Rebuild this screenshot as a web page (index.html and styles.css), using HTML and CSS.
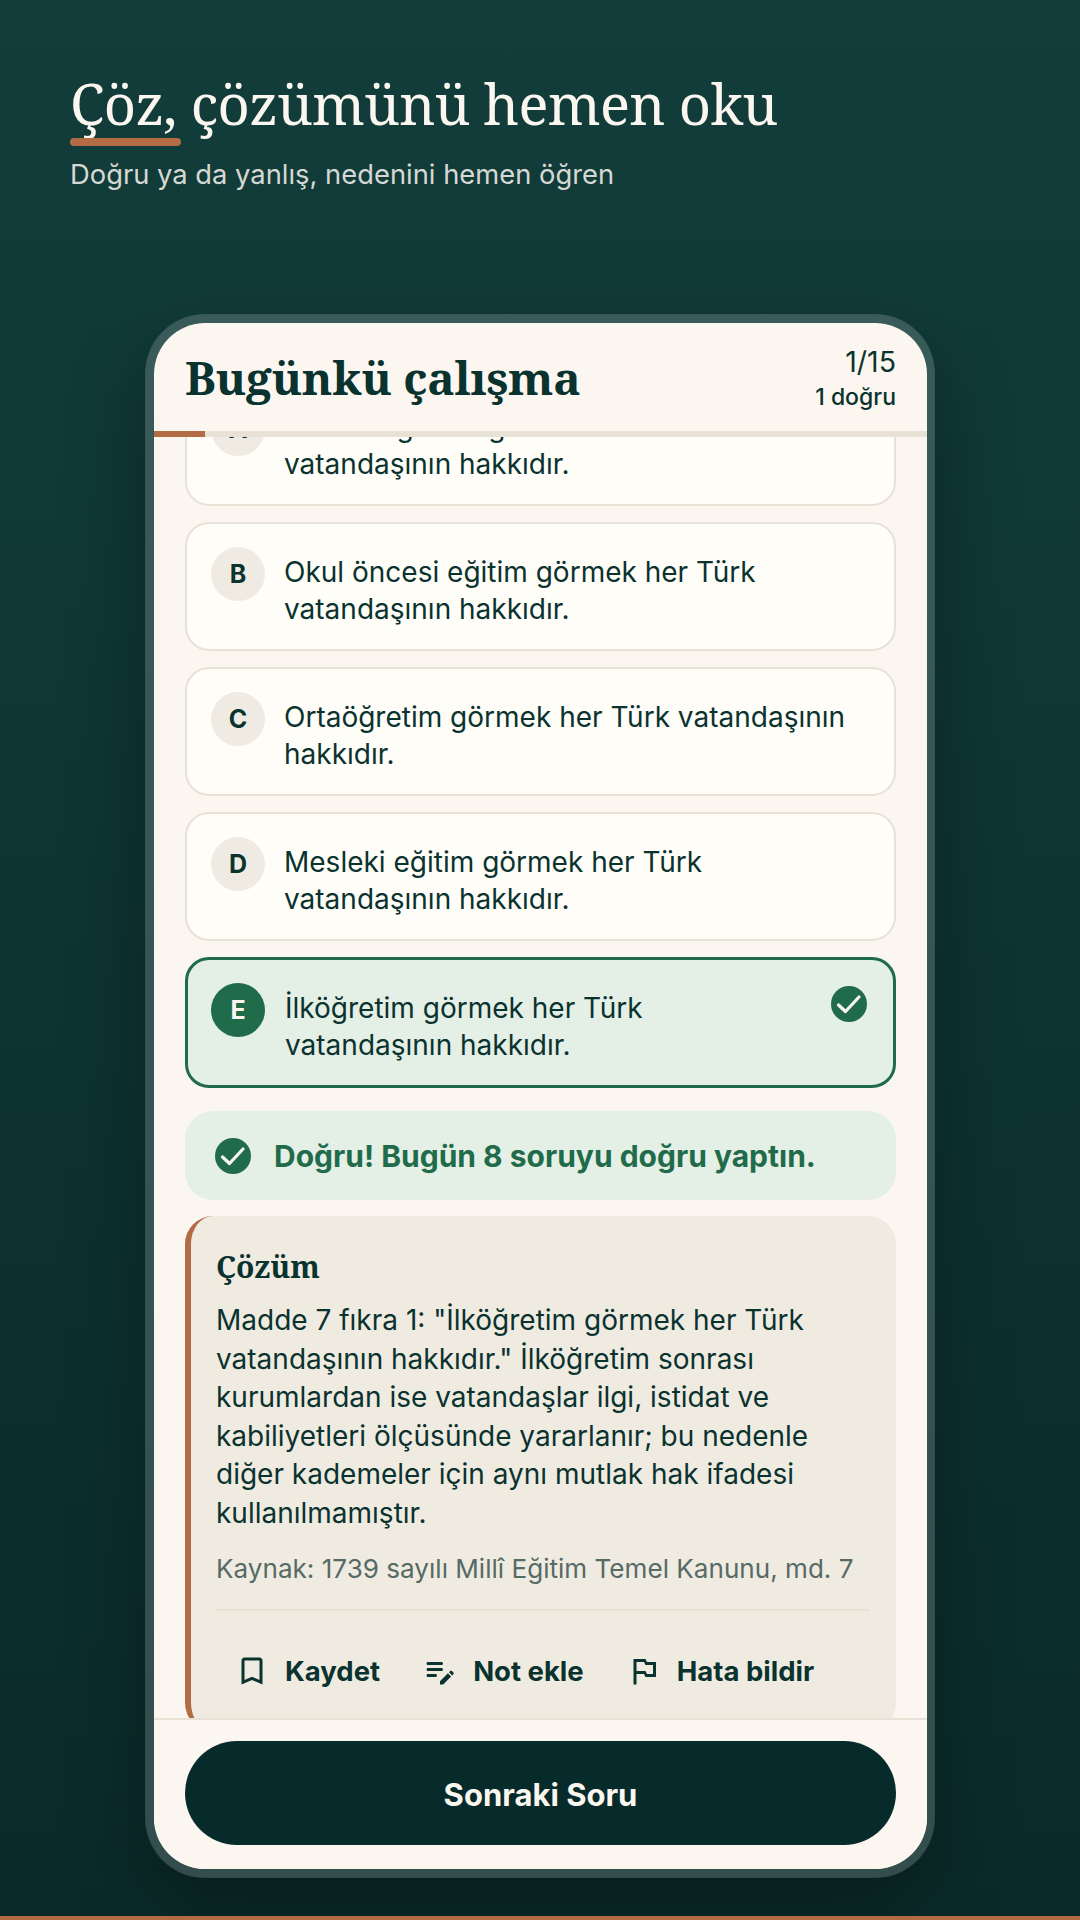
FILE: index.html
```html
<!DOCTYPE html>
<html lang="tr">
<head>
  <meta charset="UTF-8" />
  <meta name="viewport" content="width=device-width, initial-scale=1.0"/>
  <title>Bugünkü çalışma</title>
  <link rel="stylesheet" href="styles.css">
</head>
<body>

<div class="page">
  <div class="hero">
    <h1><span class="marked">Çöz,</span> çözümünü hemen oku</h1>
    <p>Doğru ya da yanlış, nedenini hemen öğren</p>
  </div>

  <div class="phone">
    <div class="top-bar">
      <h2>Bugünkü çalışma</h2>
      <div class="score">
        <span class="count">1/15</span>
        <span class="correct">1 doğru</span>
      </div>
    </div>
    <div class="progress"><div class="progress-fill"></div></div>

    <div class="scroll">
      <div class="scroll-inner">
        <div class="option">
          <span class="letter">A</span>
          <span class="option-text">Yükseköğretim görmek her Türk vatandaşının hakkıdır.</span>
        </div>
        <div class="option">
          <span class="letter">B</span>
          <span class="option-text">Okul öncesi eğitim görmek her Türk vatandaşının hakkıdır.</span>
        </div>
        <div class="option">
          <span class="letter">C</span>
          <span class="option-text">Ortaöğretim görmek her Türk vatandaşının hakkıdır.</span>
        </div>
        <div class="option">
          <span class="letter">D</span>
          <span class="option-text">Mesleki eğitim görmek her Türk vatandaşının hakkıdır.</span>
        </div>
        <div class="option option-right">
          <span class="letter">E</span>
          <span class="option-text">İlköğretim görmek her Türk vatandaşının hakkıdır.</span>
          <svg class="check" viewBox="0 0 36 36"><circle cx="18" cy="18" r="18"/><polyline points="7.5,19 14.5,25.5 28,11"/></svg>
        </div>

        <div class="feedback">
          <svg class="check" viewBox="0 0 36 36"><circle cx="18" cy="18" r="18"/><polyline points="7.5,19 14.5,25.5 28,11"/></svg>
          <span>Doğru! Bugün 8 soruyu doğru yaptın.</span>
        </div>

        <div class="solution">
          <h3>Çözüm</h3>
          <p class="solution-text">Madde 7 fıkra 1: "İlköğretim görmek her Türk vatandaşının hakkıdır." İlköğretim sonrası kurumlardan ise vatandaşlar ilgi, istidat ve kabiliyetleri ölçüsünde yararlanır; bu nedenle diğer kademeler için aynı mutlak hak ifadesi kullanılmamıştır.</p>
          <p class="source">Kaynak: 1739 sayılı Millî Eğitim Temel Kanunu, md. 7</p>
          <div class="actions">
            <div class="action">
              <svg viewBox="0 0 24 24"><path d="M17 3H7c-1.1 0-2 .9-2 2v16l7-3 7 3V5c0-1.1-.9-2-2-2zm0 15l-5-2.18L7 18V5h10v13z"/></svg>
              <span>Kaydet</span>
            </div>
            <div class="action">
              <svg viewBox="0 0 24 24"><path d="M14 11c0 .55-.45 1-1 1H4c-.55 0-1-.45-1-1s.45-1 1-1h9c.55 0 1 .45 1 1zM3 7c0 .55.45 1 1 1h9c.55 0 1-.45 1-1s-.45-1-1-1H4c-.55 0-1 .45-1 1zm7 8c0-.55-.45-1-1-1H4c-.55 0-1 .45-1 1s.45 1 1 1h5c.55 0 1-.45 1-1zm8.01-2.13.71-.71c.39-.39 1.02-.39 1.41 0l.71.71c.39.39.39 1.02 0 1.41l-.71.71-2.12-2.12zm-.71.71L12 18.88V21h2.12l5.3-5.3-2.12-2.12z"/></svg>
              <span>Not ekle</span>
            </div>
            <div class="action">
              <svg viewBox="0 0 24 24"><path d="M14 6l-1-2H5v17h2v-7h5l1 2h7V6h-6zm4 8h-4l-1-2H7V6h5l1 2h5v6z"/></svg>
              <span>Hata bildir</span>
            </div>
          </div>
        </div>
      </div>
    </div>

    <div class="footer">
      <button type="button" class="next-btn">Sonraki Soru</button>
    </div>
  </div>

  <div class="bottom-line"></div>
</div>

</body>
</html>
```

FILE: styles.css
```css
html, body { margin: 0; padding: 0; }
body { font-family: Inter, "Noto Sans", sans-serif; color: #0a322f; }

.page {
  width: 1080px;
  height: 1920px;
  display: flex;
  flex-direction: column;
  overflow: hidden;
  background: linear-gradient(180deg, #123d3b 0%, #0f3836 30%, #0a2a29 100%);
}

.hero { height: 314px; padding: 70px 70px 0; box-sizing: border-box; color: #fbf7f0; }
.hero h1 {
  margin: 0;
  font-family: "Noto Serif", "Liberation Serif", serif;
  font-weight: 400;
  font-size: 56px;
  line-height: 66px;
  letter-spacing: -0.65px;
}
.marked { position: relative; display: inline-block; }
.marked::after {
  content: "";
  position: absolute;
  left: 0;
  bottom: -10px;
  width: 111px;
  height: 8px;
  border-radius: 4px;
  background: #b36b43;
}
.hero p { margin: 21px 0 0; font-size: 27.35px; line-height: 36px; color: rgba(251, 247, 240, 0.85); }

.phone {
  width: 790px;
  height: 1564px;
  margin: 0 auto;
  box-sizing: border-box;
  border: 9px solid rgba(255, 255, 255, 0.17);
  border-right-width: 8px;
  border-radius: 60px;
  background: #fbf7f0;
  background-clip: padding-box;
  display: flex;
  flex-direction: column;
  overflow: hidden;
  box-shadow: 0 30px 80px rgba(0, 0, 0, 0.3);
}

.top-bar {
  height: 108px;
  padding: 0 31px;
  flex: none;
  display: flex;
  align-items: center;
  justify-content: space-between;
}
.top-bar h2 {
  margin: 0;
  font-family: "Noto Serif", "Liberation Serif", serif;
  font-weight: 700;
  font-size: 46px;
  letter-spacing: -0.3px;
}
.score { display: flex; flex-direction: column; align-items: flex-end; margin-top: 4px; }
.count { font-size: 28.5px; line-height: 36px; }
.correct { font-size: 23px; line-height: 34px; font-weight: 500; }

.progress { height: 6px; flex: none; background: #e8e2d6; }
.progress-fill { width: 51px; height: 100%; background: #b36b43; }

.scroll { flex: 1; overflow: hidden; min-height: 0; }
.scroll-inner {
  margin-top: -60px;
  padding: 0 31px;
  display: flex;
  flex-direction: column;
}

.option {
  min-height: 129px;
  margin-bottom: 16px;
  padding: 23px 24px 0;
  box-sizing: border-box;
  display: flex;
  align-items: flex-start;
  gap: 19px;
  background: #fffdf8;
  border: 2px solid #e8e2d6;
  border-radius: 24px;
}
.letter {
  width: 54px;
  height: 54px;
  flex: none;
  border-radius: 50%;
  background: #f0ebe2;
  display: flex;
  align-items: center;
  justify-content: center;
  font-weight: 700;
  font-size: 25px;
}
.option-text { flex: 1; font-size: 28px; line-height: 37px; padding-top: 7px; padding-right: 12px; }
.option-right {
  min-height: 131px;
  margin-bottom: 23px;
  padding-left: 23px;
  gap: 20px;
  background: #e4efe6;
  border: 3px solid #1f6b4a;
}
.option-right .letter { background: #1f6b4a; color: #fbf7f0; }
.option-right .option-text { padding-right: 38px; }
.check { width: 36px; height: 36px; flex: none; }
.check circle { fill: #1f6b4a; }
.check polyline { fill: none; stroke: #fbf7f0; stroke-width: 3.2; stroke-linecap: round; stroke-linejoin: round; }
.option-right .check { margin: 3px 2px 0 0; }

.feedback {
  height: 89px;
  margin-bottom: 16px;
  padding: 0 30px;
  box-sizing: border-box;
  display: flex;
  align-items: center;
  gap: 23px;
  background: #e4efe6;
  border-radius: 28px;
  font-weight: 700;
  font-size: 30px;
  color: #1f6b4a;
}

.solution {
  padding: 29px 26px 30px 25px;
  background: #f0ebe1;
  border-left: 6px solid #b36b43;
  border-radius: 28px;
}
.solution h3 {
  margin: 0 0 12px;
  font-family: "Noto Serif", "Liberation Serif", serif;
  font-weight: 700;
  font-size: 30px;
  line-height: 44px;
}
.solution-text { margin: 0; font-size: 28px; line-height: 38.5px; }
.source { margin: 19px 0 0; padding-bottom: 22px; font-size: 26.1px; line-height: 36px; color: #566a66; border-bottom: 2px solid #e6e1d5; }

.actions { display: flex; gap: 6px; margin-top: 30px; }
.action {
  height: 60px;
  padding: 0 18px;
  display: flex;
  align-items: center;
  gap: 15px;
  font-weight: 700;
  font-size: 27.5px;
}
.action svg { width: 36px; height: 36px; fill: #0a322f; }

.footer {
  flex: none;
  padding: 21px 31px 24px;
  border-top: 2px solid #e8e2d6;
  background: #fbf7f0;
}
.next-btn {
  width: 100%;
  height: 104px;
  padding: 2px 0 0;
  border: none;
  border-radius: 52px;
  background: #072b2a;
  color: #fbf7f0;
  font-family: inherit;
  font-weight: 700;
  font-size: 31px;
}

.bottom-line { height: 4px; flex: none; margin-top: auto; background: #b36b43; }
```
